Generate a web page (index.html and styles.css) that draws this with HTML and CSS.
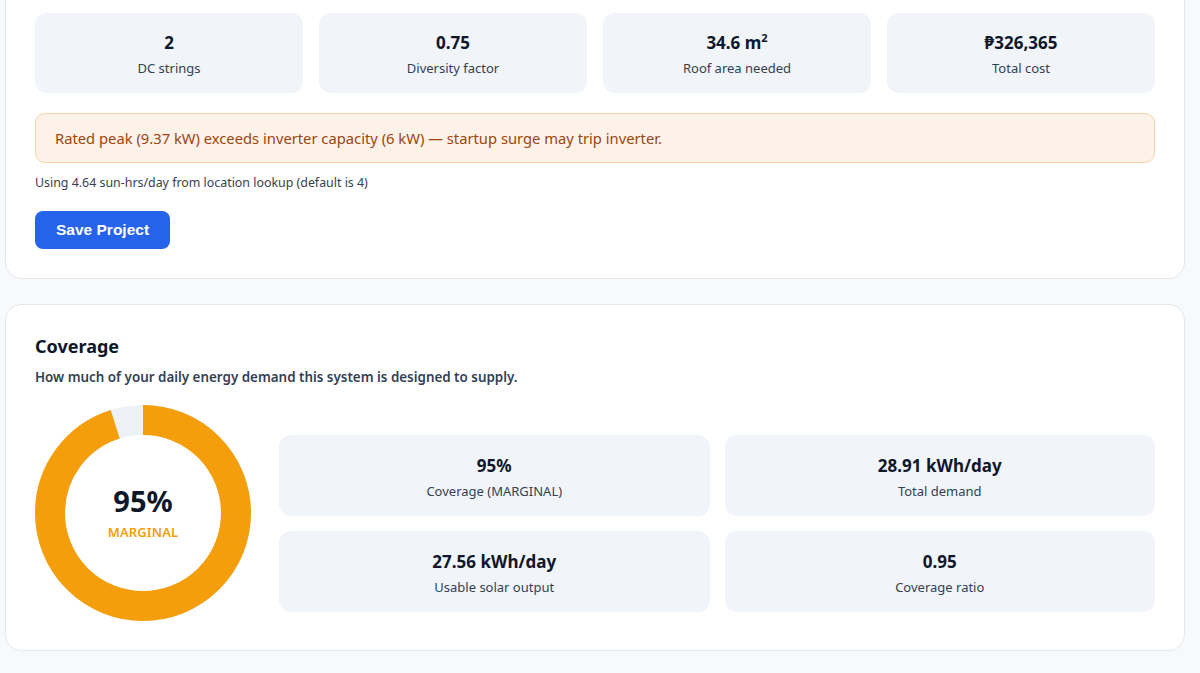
FILE: index.html
```html
<!DOCTYPE html>
<html lang="en">
<head>
<meta charset="utf-8">
<title>Solar Sizing</title>
<link rel="stylesheet" href="styles.css">
</head>
<body>
<main class="page">
  <section class="card card-first">
    <div class="stats4">
      <div class="stat"><div class="stat-value">2</div><div class="stat-label">DC strings</div></div>
      <div class="stat"><div class="stat-value">0.75</div><div class="stat-label">Diversity factor</div></div>
      <div class="stat"><div class="stat-value">34.6 m<sup>2</sup></div><div class="stat-label">Roof area needed</div></div>
      <div class="stat"><div class="stat-value">₱326,365</div><div class="stat-label">Total cost</div></div>
    </div>
    <div class="warning">Rated peak (9.37 kW) exceeds inverter capacity (6 kW) — startup surge may trip inverter.</div>
    <p class="note">Using 4.64 sun-hrs/day from location lookup (default is 4)</p>
    <button class="btn-primary" type="button">Save Project</button>
  </section>

  <section class="card">
    <h2 class="card-title">Coverage</h2>
    <p class="card-sub">How much of your daily energy demand this system is designed to supply.</p>
    <div class="coverage">
      <div class="donut">
        <svg width="216" height="216" viewBox="0 0 216 216">
          <circle cx="108" cy="108" r="93" fill="none" stroke="#eef1f5" stroke-width="30"/>
          <circle cx="108" cy="108" r="93" fill="none" stroke="#f59e0b" stroke-width="30" stroke-dasharray="555.12 584.34" transform="rotate(-90 108 108)"/>
        </svg>
        <div class="donut-center">
          <div class="donut-value">95%</div>
          <div class="donut-label">MARGINAL</div>
        </div>
      </div>
      <div class="stats2">
        <div class="stat"><div class="stat-value">95%</div><div class="stat-label">Coverage (MARGINAL)</div></div>
        <div class="stat"><div class="stat-value">28.91 kWh/day</div><div class="stat-label">Total demand</div></div>
        <div class="stat"><div class="stat-value">27.56 kWh/day</div><div class="stat-label">Usable solar output</div></div>
        <div class="stat"><div class="stat-value">0.95</div><div class="stat-label">Coverage ratio</div></div>
      </div>
    </div>
  </section>
</main>
</body>
</html>
```

FILE: styles.css
```css
* { box-sizing: border-box; }
html, body { margin: 0; padding: 0; }
body {
  background: #f8f9fb;
  font-family: "Noto Sans", "Open Sans", sans-serif;
  color: #0f172a;
  overflow: hidden;
}
.page {
  width: 1180px;
  margin-left: 5px;
  display: flex;
  flex-direction: column;
  gap: 25px;
}
.card {
  background: #fff;
  border: 1px solid #e4e7eb;
  border-radius: 16px;
  padding: 29px;
}
.card-first { margin-top: -17px; }

.stats4 {
  display: grid;
  grid-template-columns: repeat(4, 1fr);
  gap: 16px;
}
.stat {
  background: #f1f4f9;
  border-radius: 12px;
  height: 80px;
  padding-top: 18px;
  text-align: center;
}
.stat-value {
  font-size: 17px;
  font-weight: 700;
  line-height: 24px;
  color: #0f172a;
}
.stat-value sup { font-size: 11px; line-height: 0; vertical-align: 7px; }
.stat-label {
  margin-top: 4px;
  font-size: 13px;
  line-height: 18px;
  color: #334155;
}
.warning {
  margin-top: 20px;
  height: 50px;
  display: flex;
  align-items: center;
  padding: 0 19px;
  background: #fdf2e8;
  border: 1px solid #f5d2a9;
  border-radius: 10px;
  color: #9c4510;
  font-size: 14.75px;
}
.note {
  margin: 12px 0 0;
  font-size: 12.4px;
  line-height: 16px;
  color: #374151;
}
.btn-primary {
  margin-top: 20px;
  display: block;
  height: 38px;
  padding: 0 21px;
  border: 0;
  border-radius: 8px;
  background: #2563eb;
  color: #fff;
  font-family: "Liberation Sans", Arial, sans-serif;
  font-weight: 700;
  font-size: 15.5px;
}
.card-title {
  margin: 0;
  font-size: 18px;
  line-height: 24px;
  font-weight: 700;
  color: #0f172a;
}
.card-sub {
  margin: 9px 0 0;
  font-size: 13.4px;
  line-height: 20px;
  font-weight: 600;
  color: #334155;
}
.coverage {
  margin-top: 18px;
  display: flex;
  align-items: flex-start;
  gap: 28px;
}
.donut {
  position: relative;
  width: 216px;
  height: 216px;
  flex: none;
}
.donut svg { display: block; }
.donut-center {
  position: absolute;
  inset: 0;
  display: flex;
  flex-direction: column;
  align-items: center;
  justify-content: center;
  padding-bottom: 2px;
}
.donut-value {
  font-size: 29px;
  font-weight: 700;
  line-height: 36px;
  color: #0f172a;
}
.donut-label {
  margin-top: 4px;
  font-size: 13px;
  line-height: 18px;
  font-weight: 600;
  color: #f59e0b;
  letter-spacing: 0.1px;
}
.stats2 {
  flex: 1;
  margin-top: 30px;
  display: grid;
  grid-template-columns: 1fr 1fr;
  gap: 15px 15px;
}
.stats2 .stat { height: 81px; padding-top: 19px; }
```
